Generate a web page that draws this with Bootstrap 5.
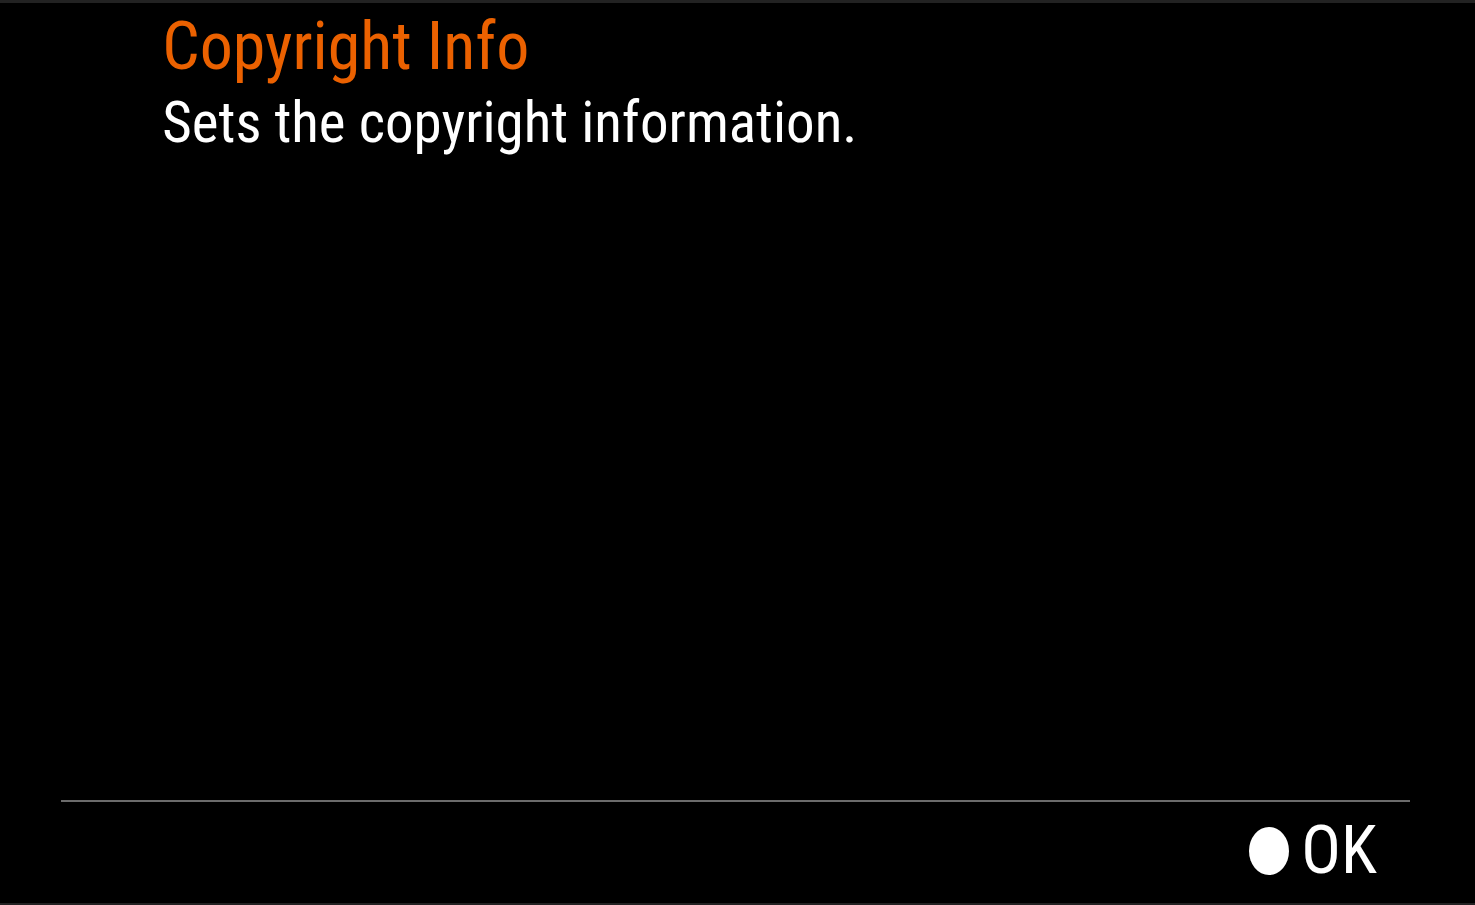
<!DOCTYPE html>
<html lang="en">
<head>
<meta charset="utf-8">
<meta name="viewport" content="width=device-width, initial-scale=1">
<title>Copyright Info</title>
<link href="https://cdn.jsdelivr.net/npm/bootstrap@5.3.0/dist/css/bootstrap.min.css" rel="stylesheet">
<style>
body { background: #000; color: #fff; font-family: "Roboto Condensed", "Roboto", sans-serif; }
.screen { border-top: 3px solid #222; border-bottom: 2px solid #222; }
.help-text { padding: 6px 11% 0; }
.help-title { color: #eb6100; font-size: 66px; line-height: 76px; }
.help-copy { font-size: 57px; line-height: 76px; }
.help-footer { margin: 0 65px 0 61px; border-top: 2px solid #6b6b6b; padding: 11px 33px 14px; }
.ok-button { color: #fff; font-size: 66px; line-height: 76px; gap: 12px; }
</style>
</head>
<body>
<div class="screen min-vh-100 d-flex flex-column">
<main class="help-text flex-grow-1">
<h1 class="help-title fw-normal m-0">Copyright Info</h1>
<p class="help-copy m-0">Sets the copyright information.</p>
</main>
<footer class="help-footer d-flex justify-content-end">
<button type="button" class="ok-button btn border-0 p-0 d-flex align-items-center">
<svg width="40" height="48" viewBox="0 0 40 48" aria-hidden="true"><ellipse cx="20" cy="24" rx="20" ry="24" fill="#fff"/></svg>
<span>OK</span>
</button>
</footer>
</div>
<script src="https://cdn.jsdelivr.net/npm/bootstrap@5.3.0/dist/js/bootstrap.bundle.min.js"></script>
</body>
</html>
